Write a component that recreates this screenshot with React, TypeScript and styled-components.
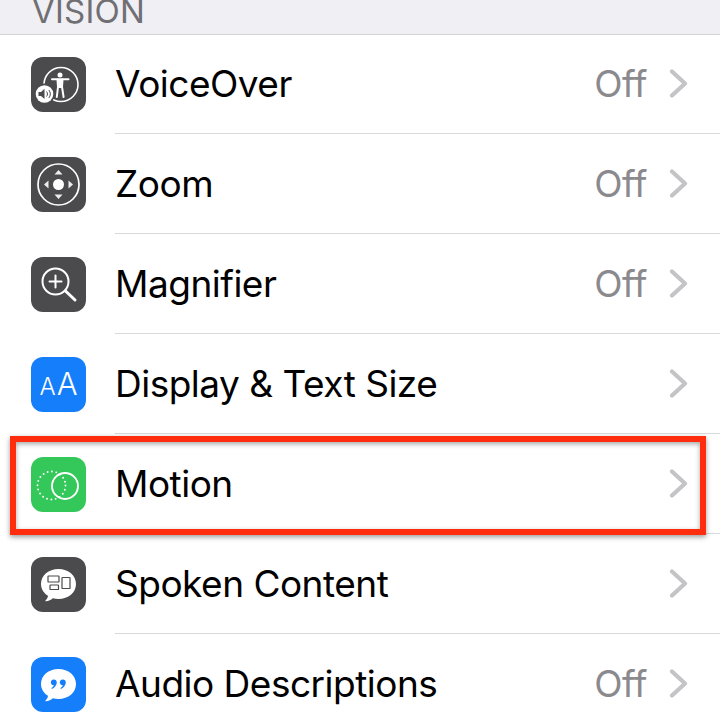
import React from 'react'
import styled, { createGlobalStyle } from 'styled-components'

const GlobalStyle = createGlobalStyle`
	html, body {
		margin: 0;
		padding: 0;
		background: #ffffff;
	}
`

const Page = styled.div`
	width: 720px;
	height: 720px;
	overflow: hidden;
	background: #ffffff;
	font-family: Inter, "Liberation Sans", sans-serif;
`

const SectionHeader = styled.div`
	position: relative;
	z-index: 1;
	box-sizing: border-box;
	height: 34px;
	padding: 0 0 23px 32px;
	display: flex;
	align-items: flex-end;
	background: #efeff4;
	box-shadow: 0 1px 0 #d2d2d6;
	overflow: hidden;
`

const SectionTitle = styled.span`
	font-size: 33px;
	line-height: 0;
	color: #6f6f74;
	letter-spacing: 0.2px;
`

const Row = styled.div`
	position: relative;
	box-sizing: border-box;
	height: 100px;
	padding-left: 31px;
	display: flex;
	align-items: center;
	gap: 29px;
`

const IconBox = styled.div<{ $color: string }>`
	flex: none;
	width: 55px;
	height: 55px;
	border-radius: 12px;
	background: ${p => p.$color};
	display: flex;
	align-items: center;
	justify-content: center;
`

const RowBody = styled.div`
	flex: 1;
	box-sizing: border-box;
	height: 100px;
	padding-right: 32px;
	display: flex;
	align-items: center;
	border-bottom: 1px solid #d9d9dc;
`

const Label = styled.span`
	flex: 1;
	font-size: 37px;
	line-height: 1;
	color: #000000;
	letter-spacing: -0.5px;
`

const Detail = styled.span`
	font-size: 37px;
	line-height: 1;
	color: #8a8a8e;
	margin-right: 22px;
	letter-spacing: -0.5px;
`

const AaGlyphs = styled.div`
	display: flex;
	align-items: baseline;
	color: #ffffff;
	font-weight: 300;
	line-height: 1;
	transform: translateY(-1px);
`

const SmallA = styled.span`
	font-size: 24px;
`

const BigA = styled.span`
	font-size: 31px;
	margin-left: 1px;
`

const Highlight = styled.div`
	position: absolute;
	left: 10px;
	top: 2px;
	box-sizing: border-box;
	width: 696px;
	height: 99px;
	border: 6px solid #ff2d0d;
	box-shadow: 0 2px 5px rgba(0, 0, 0, 0.4), inset 0 2px 5px rgba(0, 0, 0, 0.35);
`

const Chevron = () => (
	<svg width="19" height="29" viewBox="0 0 19 29" fill="none">
		<path d="M3 2.5 L16 14.5 L3 26.5" stroke="#c4c4c7" strokeWidth="4.2" strokeLinecap="round" strokeLinejoin="round" />
	</svg>
)

const DARK = '#4b4b4d'
const BLUE = '#147efb'

const Bubble = () => (
	<path
		d="M27.5 12 C37.5 12 45 18.5 45 27 C45 35.5 37.5 42 27.5 42 C25.5 42 23.5 41.8 21.8 41.3 C20 43 17.5 44.2 15 44.2 C14.3 44.2 14.2 43.6 14.7 43.2 C16 42 16.8 40.6 17 38.8 C12.5 36 10 31.8 10 27 C10 18.5 17.5 12 27.5 12 Z"
		fill="#fff"
	/>
)

const VoiceOverIcon = () => (
	<svg width="55" height="55" viewBox="0 0 55 55">
		<circle cx="30" cy="27.5" r="17" fill="none" stroke="#fff" strokeWidth="1.6" />
		<circle cx="29" cy="18" r="2.5" fill="#fff" />
		<path d="M21 22.2 L37.5 22.2" stroke="#fff" strokeWidth="2" strokeLinecap="round" />
		<path d="M26.5 22.5 L27 30 L25.8 40 M31.5 22.5 L31 30 L32.6 40" stroke="#fff" strokeWidth="2" fill="none" strokeLinecap="round" />
		<path d="M27 23 L31 23 L30.6 31 L27.4 31 Z" fill="#fff" />
		<circle cx="13.5" cy="37" r="10.5" fill={DARK} />
		<circle cx="13.5" cy="37" r="8.8" fill="#fff" />
		<path d="M7.5 35 L10 35 L13.5 31.8 L13.5 42 L10 39 L7.5 39 Z" fill={DARK} />
		<path d="M15.5 34.5 C16.8 36 16.8 38 15.5 39.5 M17.8 33 C19.8 35.5 19.8 38.5 17.8 41" stroke={DARK} strokeWidth="1" fill="none" />
	</svg>
)

const ZoomIcon = () => (
	<svg width="55" height="55" viewBox="0 0 55 55">
		<circle cx="27.5" cy="27.5" r="20.5" fill="none" stroke="#fff" strokeWidth="1.7" />
		<circle cx="27.5" cy="27.5" r="5.5" fill="#fff" />
		<path d="M27.5 13 L31.5 17.5 L23.5 17.5 Z M27.5 42 L31.5 37.5 L23.5 37.5 Z M13 27.5 L17.5 23.5 L17.5 31.5 Z M42 27.5 L37.5 23.5 L37.5 31.5 Z" fill="#fff" opacity="0.9" />
	</svg>
)

const MagnifierIcon = () => (
	<svg width="55" height="55" viewBox="0 0 55 55">
		<circle cx="24.5" cy="24.5" r="13" fill="none" stroke="#fff" strokeWidth="2" />
		<path d="M24.5 18.5 L24.5 30.5 M18.5 24.5 L30.5 24.5" stroke="#fff" strokeWidth="2" strokeLinecap="round" />
		<path d="M34.5 34 L44 43" stroke="#fff" strokeWidth="3" strokeLinecap="round" />
	</svg>
)

const MotionIcon = () => (
	<svg width="55" height="55" viewBox="0 0 55 55">
		<circle cx="20.5" cy="28.5" r="14" fill="none" stroke="#fff" strokeWidth="1.9" strokeLinecap="round" strokeDasharray="0 4.4" />
		<circle cx="34" cy="29" r="13" fill="none" stroke="#fff" strokeWidth="1.9" />
	</svg>
)

const SpokenIcon = () => (
	<svg width="55" height="55" viewBox="0 0 55 55">
		<Bubble />
		<g fill="none" stroke={DARK} strokeWidth="1.2">
			<rect x="17" y="19" width="11" height="6" rx="0.6" />
			<rect x="19" y="28" width="8.5" height="4.5" rx="0.6" />
			<rect x="31" y="20.5" width="8" height="11" rx="0.6" />
		</g>
	</svg>
)

const AudioIcon = () => (
	<svg width="55" height="55" viewBox="0 0 55 55">
		<Bubble />
		<g fill={BLUE}>
			<circle cx="22.8" cy="25.3" r="2.9" />
			<path d="M25.5 25.5 C25.5 28.5 23.5 31.2 20.8 32 L20.5 31 C22 30 22.8 29 23 27.5 Z" />
			<circle cx="31.8" cy="25.3" r="2.9" />
			<path d="M34.5 25.5 C34.5 28.5 32.5 31.2 29.8 32 L29.5 31 C31 30 31.8 29 32 27.5 Z" />
		</g>
	</svg>
)

const AaIcon = () => (
	<AaGlyphs>
		<SmallA>A</SmallA>
		<BigA>A</BigA>
	</AaGlyphs>
)

const rows = [
	{ label: 'VoiceOver', detail: 'Off', color: DARK, icon: <VoiceOverIcon /> },
	{ label: 'Zoom', detail: 'Off', color: DARK, icon: <ZoomIcon /> },
	{ label: 'Magnifier', detail: 'Off', color: DARK, icon: <MagnifierIcon /> },
	{ label: 'Display & Text Size', color: BLUE, icon: <AaIcon /> },
	{ label: 'Motion', color: '#34c759', icon: <MotionIcon />, marked: true },
	{ label: 'Spoken Content', color: DARK, icon: <SpokenIcon /> },
	{ label: 'Audio Descriptions', detail: 'Off', color: BLUE, icon: <AudioIcon /> },
]

export default function App() {
	return (
		<Page>
			<GlobalStyle />
			<SectionHeader>
				<SectionTitle>VISION</SectionTitle>
			</SectionHeader>
			{rows.map(row => (
				<Row key={row.label}>
					<IconBox $color={row.color}>{row.icon}</IconBox>
					<RowBody>
						<Label>{row.label}</Label>
						{row.detail && <Detail>{row.detail}</Detail>}
						<Chevron />
					</RowBody>
					{row.marked && <Highlight />}
				</Row>
			))}
		</Page>
	)
}
